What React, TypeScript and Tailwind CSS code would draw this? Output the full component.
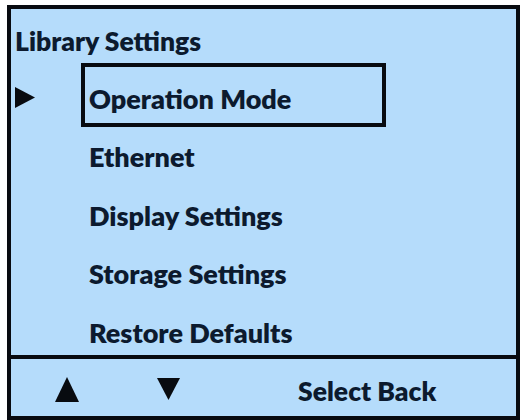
const ITEMS = ['Operation Mode', 'Ethernet', 'Display Settings', 'Storage Settings', 'Restore Defaults'];

export default function App() {
  const selected = 0;

  return (
    <div className="w-[523px] h-[420px] bg-white pl-[7px] pt-[5px] font-['Lato','Open_Sans',sans-serif] font-extrabold text-[#0c1a2e]">
      <div className="w-[513px] h-[415px] border-4 border-[#080b10] bg-[#b5dcfb] flex flex-col">
        {/* Header */}
        <div className="h-[53.5px] pt-[19px] pl-[4px] text-[26.5px] leading-[26.5px] whitespace-nowrap">Library Settings</div>

        {/* Menu */}
        <div className="flex flex-col">
          {ITEMS.map((item, i) => (
            <div key={item} className="h-[58.5px] flex items-center">
              <div className="w-[70px] pl-[4px] mt-[11px] flex">
                {i === selected && (
                  <svg width="20" height="21" viewBox="0 0 20 21">
                    <polygon points="0,0 20,10.5 0,21" fill="#080b10" />
                  </svg>
                )}
              </div>
              <div
                className={`h-[64px] w-[305px] shrink-0 mt-[6.5px] border-4 pl-[4px] flex items-center ${
                  i === selected ? 'border-[#080b10]' : 'border-transparent'
                }`}
              >
                <span className="pt-[6px] text-[27px] leading-[27px] whitespace-nowrap">{item}</span>
              </div>
            </div>
          ))}
        </div>

        {/* Footer */}
        <div className="mt-auto border-t-4 border-[#080b10] h-[61px] flex items-center pl-[44px]">
          <svg width="24" height="25" viewBox="0 0 24 25" className="mt-[4px]">
            <polygon points="12,0 24,25 0,25" fill="#080b10" />
          </svg>
          <svg width="23" height="22" viewBox="0 0 23 22" className="ml-[78px] mt-[3px]">
            <polygon points="0,0 23,0 11.5,22" fill="#080b10" />
          </svg>
          <span className="ml-[118px] pt-[8px] text-[26.5px] leading-[26.5px] whitespace-nowrap">Select Back</span>
        </div>
      </div>
    </div>
  );
}
